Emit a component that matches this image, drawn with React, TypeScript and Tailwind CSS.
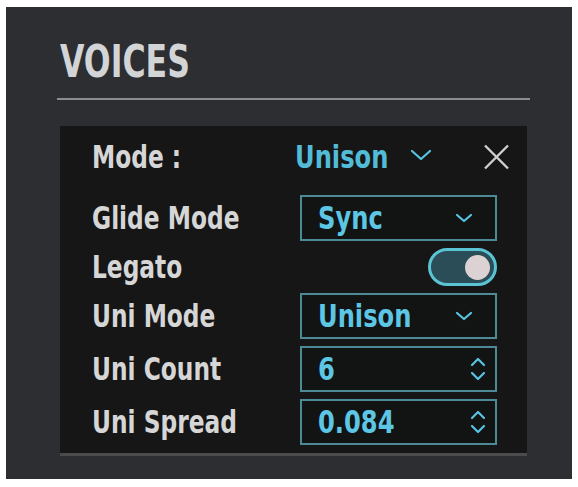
import React from "react";

const font = { fontFamily: "'DejaVu Sans Condensed', 'Liberation Sans', sans-serif" };

function Chevron({ w = 18, h = 10 }: { w?: number; h?: number }) {
  return (
    <svg width={w} height={h} viewBox={`0 0 ${w} ${h}`} fill="none">
      <path d={`M2 2 L${w / 2} ${h - 2} L${w - 2} 2`} stroke="#58c4e2" strokeWidth="2.2" strokeLinecap="round" strokeLinejoin="round" />
    </svg>
  );
}

function Spinner() {
  return (
    <svg width="16" height="26" viewBox="0 0 16 26" fill="none">
      <path d="M2 9 L8 3 L14 9" stroke="#58c4e2" strokeWidth="2.2" strokeLinecap="round" strokeLinejoin="round" />
      <path d="M2 17 L8 23 L14 17" stroke="#58c4e2" strokeWidth="2.2" strokeLinecap="round" strokeLinejoin="round" />
    </svg>
  );
}

function Box({ value, kind }: { value: string; kind: "drop" | "spin" }) {
  return (
    <div
      className={`flex h-full items-center justify-between border-2 border-[#4c8a95] bg-[#121313] pl-[16px] ${kind === "drop" ? "pr-[22px]" : "pr-[9px]"}`}
    >
      <span className="origin-left scale-x-[0.84] text-[32px] font-bold leading-none text-[#5cc6e4]">{value}</span>
      {kind === "drop" ? <Chevron /> : <Spinner />}
    </div>
  );
}

function Row({ label, children, h = "h-[46px]" }: { label: string; children: React.ReactNode; h?: string }) {
  return (
    <div className={`grid ${h} grid-cols-[208px_197px] items-center`}>
      <span className="origin-left scale-x-[0.81] whitespace-nowrap text-[32px] font-bold leading-none text-[#d6d6d6]">{label}</span>
      <div className="h-full">{children}</div>
    </div>
  );
}

export default function App() {
  return (
    <div className="h-[487px] w-[578px] bg-white pl-[6px] pt-[7px]" style={font}>
      <div className="h-[472px] w-[566px] bg-[#2c2e31] pl-[51px] pr-[42px] pt-[32px]">
        <h1 className="ml-[3px] h-[45px] origin-left scale-x-[0.78] text-[45px] font-bold leading-none text-[#d2d4d6]">VOICES</h1>
        <div className="mt-[14px] h-[2px] bg-[#8a8c8e]" />
        <div className="mx-[3px] mt-[26px] border-b-[3px] border-[#4a4b4d] bg-[#161616] pb-[8px] pl-[32px] pr-[30px] pt-[6px]">
          <div className="mb-[13px] flex h-[50px] items-center">
            <span className="w-[203px] shrink-0 origin-left scale-x-[0.81] whitespace-nowrap text-[32px] font-bold leading-none text-[#d6d6d6]">Mode :</span>
            <span className="w-[115px] shrink-0 origin-left scale-x-[0.84] text-[32px] font-bold leading-none text-[#52bcd8]">Unison</span>
            <span className="mt-[-4px] shrink-0">
              <Chevron w={22} h={12} />
            </span>
            <span className="ml-[51px] mr-[-13px] shrink-0">
              <svg width="27" height="26" viewBox="0 0 27 26" fill="none">
                <path d="M2 1.5 L25 24.5 M25 1.5 L2 24.5" stroke="#cfcfcf" strokeWidth="2.4" />
              </svg>
            </span>
          </div>
          <div className="flex flex-col gap-[7px]">
            <Row label="Glide Mode">
              <Box value="Sync" kind="drop" />
            </Row>
            <Row label="Legato" h="h-[38px]">
              <div className="flex h-full justify-end">
                <div className="flex h-[38px] w-[69px] items-center justify-end rounded-full border-[3px] border-[#5ac3d4] bg-[#2a4d58] pr-[4px]">
                  <div className="h-[25px] w-[25px] rounded-full bg-[#dcd2d4]" />
                </div>
              </div>
            </Row>
            <Row label="Uni Mode">
              <Box value="Unison" kind="drop" />
            </Row>
            <Row label="Uni Count">
              <Box value="6" kind="spin" />
            </Row>
            <Row label="Uni Spread">
              <Box value="0.084" kind="spin" />
            </Row>
          </div>
        </div>
      </div>
    </div>
  );
}
